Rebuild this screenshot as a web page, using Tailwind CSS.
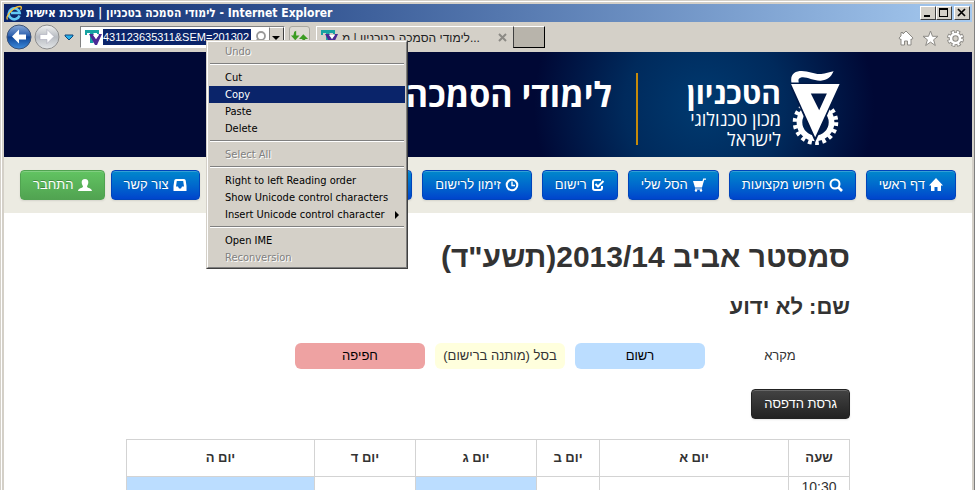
<!DOCTYPE html>
<html lang="he">
<head>
<meta charset="utf-8">
<title>לימודי הסמכה בטכניון | מערכת אישית</title>
<script src="https://cdn.jsdelivr.net/npm/@tailwindcss/browser@4"></script>
</head>
<body class="h-screen overflow-hidden bg-[#d4d0c8] font-['Liberation_Sans',sans-serif] text-[13px] text-[#333333]">
<svg class="hidden">
  <symbol id="tv" viewBox="0 0 17 17"><path d="M0 1h14v4h-2V4H8.500v10H5V4H2v2H0z" fill="#17a2a2"/><path d="M4 5h4l3 5 3-5h3l-5 11h-2z" fill="#4b2a96"/><path d="M8 6h6l-3 4z" fill="#fff"/></symbol>
</svg>
<div class="relative flex h-full flex-col border border-t-[#d4d0c8] border-r-[#808080] border-b-0 border-l-[#d4d0c8]">
<div class="flex min-h-0 flex-1 flex-col border-t border-l border-white pt-0.5 pr-0.5 pl-0.5">

  <header class="flex h-[18px] shrink-0 items-center gap-1 bg-linear-to-r from-[#0a246a] to-[#a6caf0] pr-0.5 pl-0.5 text-white">
    <svg class="h-4 w-4 shrink-0" viewBox="0 0 16 16"><path d="M13.500 10.500A5.500 5.500 0 1 1 13.700 8H5" fill="none" stroke="#62c8f5" stroke-width="2.600"/><path d="M1.500 14.500C-1 11 8 1.500 14 1.500c2 0 1.500 2 .5 3.500" fill="none" stroke="#f4c23c" stroke-width="1.300"/></svg>
    <h1 dir="ltr" class="min-w-0 flex-1 truncate font-['DejaVu_Sans_Condensed','DejaVu_Sans',sans-serif] text-xs font-bold">לימודי הסמכה בטכניון | מערכת אישית - Internet Explorer</h1>
    <div class="flex">
      <button aria-label="Minimize" class="h-3.5 w-4 border border-t-white border-r-[#404040] border-b-[#404040] border-l-white bg-[#d4d0c8]"><svg viewBox="0 0 14 12" class="h-3 w-3.5"><path d="M3 8h6v2H3z"/></svg></button>
      <button aria-label="Maximize" class="h-3.5 w-4 border border-t-white border-r-[#404040] border-b-[#404040] border-l-white bg-[#d4d0c8]"><svg viewBox="0 0 14 12" class="h-3 w-3.5"><path d="M2 1h9v9H2zM3 3v6h7V3z" fill-rule="evenodd"/></svg></button>
      <button aria-label="Close" class="ml-0.5 h-3.5 w-4 border border-t-white border-r-[#404040] border-b-[#404040] border-l-white bg-[#d4d0c8]"><svg viewBox="0 0 14 12" class="h-3 w-3.5"><path d="M3 2l7 7M10 2l-7 7" stroke="#000" stroke-width="1.700"/></svg></button>
    </div>
  </header>

  <div class="flex h-[30px] shrink-0 items-center pl-0.5">
    <button aria-label="Back" class="h-[26px] w-[26px]"><svg viewBox="0 0 26 26"><defs><linearGradient id="bk" x2="0" y2="1"><stop stop-color="#8aa9d6"/><stop offset=".45" stop-color="#2b5fae"/><stop offset=".5" stop-color="#0f4597"/><stop offset="1" stop-color="#3f8ddd"/></linearGradient></defs><circle cx="13" cy="13" r="12" fill="url(#bk)" stroke="#3a5075"/><path d="M13 6l-7 7 7 7v-4h7v-5h-7z" fill="#fff" transform="translate(0 -.5)"/></svg></button>
    <button aria-label="Forward" class="ml-0.5 h-[26px] w-[26px]"><svg viewBox="0 0 26 26"><defs><linearGradient id="fw" x2="0" y2="1"><stop stop-color="#f2f2f2"/><stop offset=".5" stop-color="#b8bcc2"/><stop offset="1" stop-color="#e4e6e8"/></linearGradient></defs><circle cx="13" cy="13" r="12" fill="url(#fw)" stroke="#8e8e8e"/><path d="M13 6l7 7-7 7v-4H6v-5h7z" fill="#fff" stroke="#aab" stroke-width=".6" transform="translate(0 -.5)"/></svg></button>
    <button aria-label="Recent pages" class="ml-1 h-3 w-2.5"><svg viewBox="0 0 10 12"><path d="M1 4h8v1L5 9 1 5z" fill="#27b0ea" stroke="#12467c"/></svg></button>
    <div class="ml-1.5 flex h-[22px] w-[205px] shrink-0 items-center border border-t-[#808080] border-r-white border-b-white border-l-[#808080] bg-white pl-1">
      <svg class="mr-px h-[17px] w-[17px] shrink-0"><use href="#tv"/></svg>
      <input aria-label="Address" value="431123635311&amp;SEM=201302" class="h-4 w-[148px] bg-[#0a246a] text-[11px] text-white outline-none">
      <button aria-label="Search" class="ml-0.5 h-4 w-4"><svg viewBox="0 0 16 16" fill="none" stroke="#999" stroke-width="1.800"><circle cx="8" cy="7" r="4"/><path d="M5 10l-4 5"/></svg></button>
      <button aria-label="Show history" class="h-full flex-1 border border-t-white border-r-[#404040] border-b-[#404040] border-l-[#808080] bg-[#d4d0c8]"><svg viewBox="0 0 12 18" class="h-[18px] w-3"><path d="M2 8h8l-4 4z"/></svg></button>
    </div>
    <button aria-label="Refresh" class="ml-1 h-[22px] w-[21px] shrink-0 rounded-[3px] border border-[#aaa8a0] bg-[#dddad3]"><svg viewBox="0 0 20 20" fill="#3b9c22"><path d="M6.500 3v5H10L5.500 13 1 8h2.500L4.500 4zM14 6.500l5 5h-3v3L13 16.500v-5H9.500z"/></svg></button>
    <div class="ml-1.5 flex h-[22px] w-[197px] items-center border-t border-l border-white pl-1">
      <svg class="mr-1 h-[17px] w-[17px] shrink-0"><use href="#tv"/></svg>
      <span dir="ltr" class="flex-1 whitespace-nowrap text-xs text-[#222222]">&#8234;לימודי הסמכה בטכניון | מ&#8236;&lrm;...</span>
      <button aria-label="Close tab" class="mr-1 h-3 w-3"><svg viewBox="0 0 12 12"><path d="M2 2l7 7M9 2l-7 7" stroke="#8c8a85" stroke-width="2"/></svg></button>
    </div>
    <button aria-label="New tab" class="h-[22px] w-8 border border-t-white border-r-black border-b-black border-l-[#404040] bg-[#b8b4ab]"></button>
    <div class="ml-auto flex items-center gap-2 pt-0.5 pr-2">
      <button aria-label="Home" class="h-4 w-4"><svg viewBox="0 0 16 16" fill="#fff" stroke="#8c8a85"><path d="M8 1l7 7-1 1.500-1-.5v6H9.500v-4h-3v4H3V9l-1 .5L1 8l2-2V2.500h2V4z"/></svg></button>
      <button aria-label="Favorites" class="h-[17px] w-[17px]"><svg viewBox="0 0 17 17" fill="#fff" stroke="#8c8a85"><path d="M8.500 1l2 5.300h5.500l-4.400 3.500 1.700 5.700-4.800-3.400-4.800 3.400 1.700-5.700L1 6.300h5.500z"/></svg></button>
      <button aria-label="Tools" class="h-[17px] w-[17px]"><svg viewBox="0 0 17 17" fill="none"><circle cx="8.500" cy="8.500" r="6.400" stroke="#8c8a85" stroke-width="4.200" stroke-dasharray="3.400 1.630"/><circle cx="8.500" cy="8.500" r="4.500" stroke="#8c8a85" stroke-width="4.600"/><circle cx="8.500" cy="8.500" r="6.400" stroke="#fff" stroke-width="2.400" stroke-dasharray="2 3.030" stroke-dashoffset="-.7"/><circle cx="8.500" cy="8.500" r="4.500" stroke="#fff" stroke-width="2.600"/></svg></button>
    </div>
  </div>

  <main dir="rtl" class="min-h-0 flex-1 overflow-hidden bg-white">
    <div class="flex h-[105px] items-center bg-[#000835] bg-[radial-gradient(circle_at_700px_54px,#003a70_0,#002a5c_80px,#000835_170px)] pt-2 pr-[132px] text-white">
      <svg class="h-[77px] w-[49px] shrink-0" viewBox="573 60 146 230" role="img" aria-label="הטכניון">
        <circle cx="646" cy="216" r="48" fill="none" stroke="#fff" stroke-width="17"/>
        <circle cx="646" cy="216" r="61" fill="none" stroke="#fff" stroke-width="14" stroke-dasharray="11 10.300"/>
        <path d="M566 98h158l-79 178z" fill="#001846"/>
        <path d="M573 102h145l-73 159zM632 130l25 50 23-50z" fill="#fff" fill-rule="evenodd"/>
        <path d="M574 97C570 72 585 63 605 63c22 0 38 11 58 9 14-1 23-6 37-8-8 18-19 27-38 28-26 1-43-14-61-9-6 2-7 6-5 14z" fill="#fff"/>
      </svg>
      <div class="mt-2 mr-[10px] w-[94px] whitespace-nowrap font-['Open_Sans','DejaVu_Sans',sans-serif] text-lg leading-5">
        <p class="text-[30px] leading-8 font-bold">הטכניון</p>
        <p>מכון טכנולוגי</p>
        <p>לישראל</p>
      </div>
      <div class="mr-[49px] h-[72px] w-0.5 shrink-0 bg-[#c58a0a]"></div>
      <h2 class="mr-6 mb-7 whitespace-nowrap font-['Open_Sans','DejaVu_Sans',sans-serif] text-[34px] font-bold">לימודי הסמכה בטכניון</h2>
    </div>

    <nav class="flex h-14 items-center gap-2.5 bg-[#ecebe2] px-4 text-white [&_button]:flex [&_button]:h-[30px] [&_button]:shrink-0 [&_button]:items-center [&_button]:gap-1 [&_button]:rounded [&_button]:border [&_button]:px-3 [&_button]:whitespace-nowrap [&_button]:shadow-[inset_0_1px_0_rgba(255,255,255,.2),0_1px_2px_rgba(0,0,0,.1)] [&_button]:text-shadow-[0_-1px_0_rgba(0,0,0,.25)] [&_svg]:h-3.5 [&_svg]:w-3.5">
      <button class="border-[#0044bb] bg-linear-to-b from-[#0088cc] to-[#0044cc]"><svg viewBox="0 0 14 14" fill="#fff"><path d="M7 0l7 7.500h-2V13H8.500V9h-3v4H2V7.500H0z"/></svg>דף ראשי</button>
      <button class="border-[#0044bb] bg-linear-to-b from-[#0088cc] to-[#0044cc]"><svg viewBox="0 0 14 14" fill="none" stroke="#fff" stroke-width="2"><circle cx="6" cy="6" r="4.500"/><path d="M9 9l4 4" stroke-width="2.600"/></svg>חיפוש מקצועות</button>
      <button class="border-[#0044bb] bg-linear-to-b from-[#0088cc] to-[#0044cc]"><svg viewBox="0 0 14 14" fill="#fff"><path d="M1 3h9.500L11.200.5H14v1.300h-1.800L10 9.500h-7zM3 10.500h7v1H3z"/><circle cx="4" cy="12.500" r="1.200"/><circle cx="9" cy="12.500" r="1.200"/></svg>הסל שלי</button>
      <button class="border-[#0044bb] bg-linear-to-b from-[#0088cc] to-[#0044cc]"><svg viewBox="0 0 14 14" fill="none" stroke="#fff" stroke-width="2"><path d="M10 2H4Q2 2 2 4v6q0 2 2 2h5q2 0 2-2V8M4.500 6L7 8.500 12.500 3"/></svg>רישום</button>
      <button class="border-[#0044bb] bg-linear-to-b from-[#0088cc] to-[#0044cc]"><svg viewBox="0 0 14 14" fill="none" stroke="#fff" stroke-width="2"><circle cx="7" cy="7" r="5.300"/><path d="M7 3.500V7.500h3" stroke-width="1.400"/></svg>זימון לרישום</button>
      <button aria-label="מערכת שעות" class="w-24 border-[#0044bb] bg-linear-to-b from-[#0088cc] to-[#0044cc]"></button>
      <div class="mr-auto flex gap-1.5">
        <button class="border-[#0044bb] bg-linear-to-b from-[#0088cc] to-[#0044cc]"><svg viewBox="0 0 14 14" fill="#fff" fill-rule="evenodd"><path d="M3 1h8q1.500 0 1.700 1.500L13.500 8v5H.5V8l.8-5.500Q1.500 1 3 1zM3.800 3L3 8.500h2l1 2h2l1-2h2L10.200 3z"/></svg>צור קשר</button>
        <button class="border-[#51a351] bg-linear-to-b from-[#62c462] to-[#51a351]"><svg viewBox="0 0 14 14" fill="#fff"><path d="M7 1c2.400 0 3.500 1.600 3.300 3.800C10.200 6.500 9 7.500 9 9c1 1 4.500 1.200 5 4H0c.5-2.800 4-3 5-4 0-1.500-1.200-2.500-1.300-4.200C3.500 2.600 4.600 1 7 1z"/></svg>התחבר</button>
      </div>
    </nav>

    <section class="mx-auto max-w-[724px] pt-6">
      <h2 class="mb-2.5 text-[30px] leading-10 font-bold">סמסטר אביב 2013/14(תשע"ד)</h2>
      <h3 class="mb-4 text-[22px] leading-10 font-bold">שם: לא ידוע</h3>
      <div class="mb-5 flex gap-2.5 px-[5px] text-center leading-[26px] text-black">
        <span class="w-[130px] text-[#333333]">מקרא</span>
        <span class="w-[130px] rounded-md bg-[#bbddff]">רשום</span>
        <span class="w-[130px] rounded-md bg-[#ffffdd] text-[#333333]">בסל (מותנה ברישום)</span>
        <span class="w-[130px] rounded-md bg-[#eea2a2]">חפיפה</span>
      </div>
      <button class="mb-5 block h-[30px] rounded border border-[#222222] bg-linear-to-b from-[#444444] to-[#222222] px-3 text-white shadow-[inset_0_1px_0_rgba(255,255,255,.2),0_1px_2px_rgba(0,0,0,.1)]">גרסת הדפסה</button>
      <table class="w-full table-fixed border-collapse text-center leading-5 [&_td]:border [&_td]:border-[#d3d3d3] [&_th]:border [&_th]:border-[#d3d3d3]">
        <colgroup><col class="w-[61px]"><col class="w-[189px]"><col class="w-[63px]"><col class="w-[121px]"><col class="w-[101px]"><col></colgroup>
        <thead><tr class="h-[37px]"><th>שעה</th><th>יום א</th><th>יום ב</th><th>יום ג</th><th>יום ד</th><th>יום ה</th></tr></thead>
        <tbody><tr class="h-10 align-top text-sm"><td>10:30</td><td></td><td></td><td class="bg-[#bbddff]"></td><td></td><td class="bg-[#bbddff]"></td></tr></tbody>
      </table>
    </section>
  </main>
</div>

<div role="menu" class="absolute top-[39px] left-[205px] w-[202px] border border-t-[#d4d0c8] border-r-[#404040] border-b-[#404040] border-l-[#d4d0c8] bg-[#d4d0c8] font-['DejaVu_Sans_Condensed','DejaVu_Sans',sans-serif] text-[11px] text-black">
  <div class="border border-t-white border-r-[#808080] border-b-[#808080] border-l-white p-px [&_button]:block [&_button]:h-[17px] [&_button]:w-full [&_button]:pl-4 [&_button]:text-left [&_button]:leading-4 [&_button]:whitespace-nowrap [&_hr]:mx-px [&_hr]:mt-[3px] [&_hr]:mb-1 [&_hr]:h-0.5 [&_hr]:border-t-[#808080] [&_hr]:bg-white">
    <button role="menuitem" class="text-[#808080] text-shadow-[1px_1px_0_#ffffff]">Undo</button>
    <hr>
    <button role="menuitem">Cut</button>
    <button role="menuitem" class="bg-[#0a246a] text-white">Copy</button>
    <button role="menuitem">Paste</button>
    <button role="menuitem">Delete</button>
    <hr>
    <button role="menuitem" class="text-[#808080] text-shadow-[1px_1px_0_#ffffff]">Select All</button>
    <hr>
    <button role="menuitem">Right to left Reading order</button>
    <button role="menuitem">Show Unicode control characters</button>
    <button role="menuitem"><span class="flex items-center justify-between pr-1.5">Insert Unicode control character<svg class="h-2 w-1" viewBox="0 0 4 8"><path d="M0 0l4 4-4 4z"/></svg></span></button>
    <hr>
    <button role="menuitem">Open IME</button>
    <button role="menuitem" class="text-[#808080] text-shadow-[1px_1px_0_#ffffff]">Reconversion</button>
  </div>
</div>
</div>
</body>
</html>
